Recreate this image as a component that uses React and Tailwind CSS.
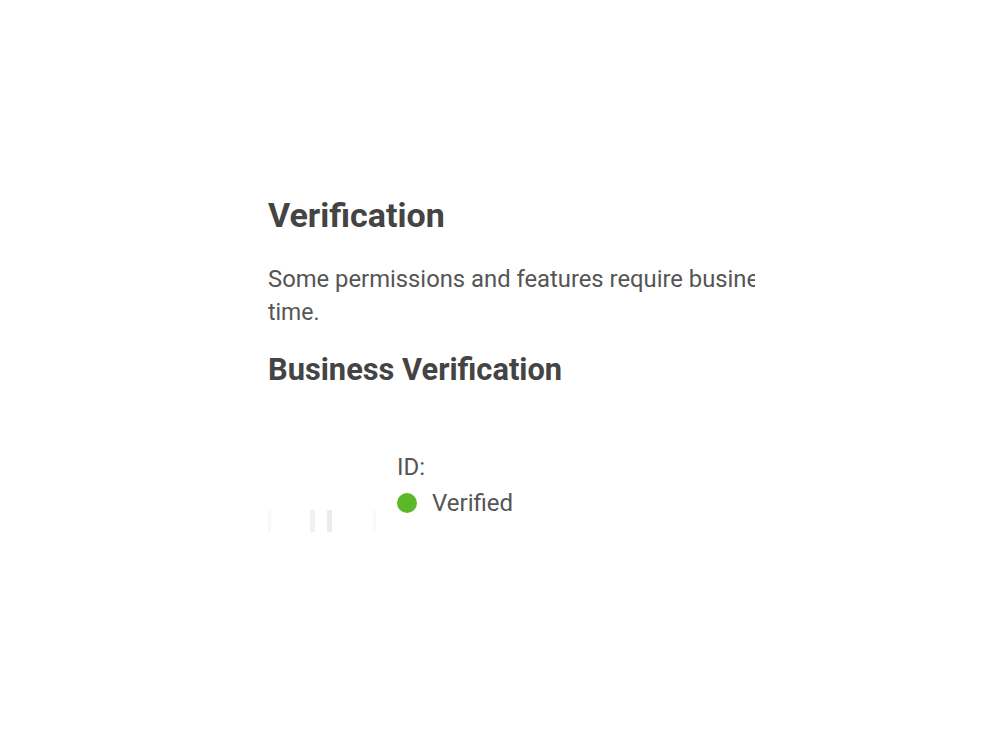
export default function App() {
  return (
    <div className="min-h-[750px] w-[1000px] bg-white font-['Roboto',sans-serif] text-[#4a4a4a]">
      <div className="ml-[268px] w-[487px] overflow-hidden pt-[193px]">
        <h1 className="text-[34px] font-bold leading-[44px] text-[#444]">Verification</h1>
        <p className="mt-[25px] whitespace-nowrap text-[23.8px] leading-[34px] text-[#555]">
          Some permissions and features require business verification. This may take some
        </p>
        <p className="text-[23px] leading-[34px] text-[#555]">time.</p>
        <h2 className="mt-[18px] text-[30.8px] font-bold leading-[44px] text-[#444]">Business Verification</h2>

        <div className="mt-[58px] flex">
          {/* faded logo placeholder */}
          <div className="flex w-[129px] items-start pt-[60px]">
            <div className="h-[22px] w-[3px] bg-[#f8f8f8]" />
            <div className="ml-[39px] h-[22px] w-[5px] bg-[#f1f1f1]" />
            <div className="ml-[12px] h-[22px] w-[5px] bg-[#ececec]" />
            <div className="ml-[41px] h-[22px] w-[3px] bg-[#fafafa]" />
          </div>
          <div className="flex flex-col">
            <span className="text-[24px] leading-[35px] text-[#555]">ID:</span>
            <div className="flex h-[35px] items-center gap-[15px]">
              <span className="h-[20px] w-[20px] rounded-full bg-[#5cb82a]" />
              <span className="text-[24px] leading-[34px] text-[#555]">Verified</span>
            </div>
          </div>
        </div>
      </div>
    </div>
  );
}
